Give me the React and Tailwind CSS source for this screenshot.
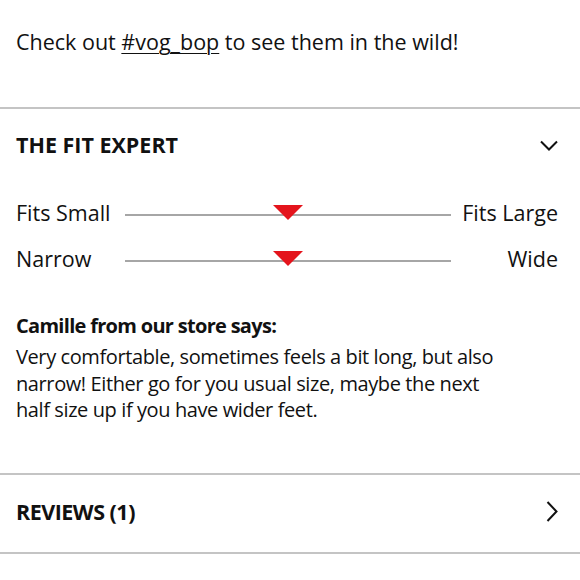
function FitSlider({ left, right }) {
  return (
    <div className="grid grid-cols-[109px_326px_1fr] items-center h-[26px]">
      <span className="whitespace-nowrap">{left}</span>
      <div className="relative top-[2px] h-[2px] bg-[#a6a6a6]">
        <div className="absolute left-1/2 -translate-x-1/2 top-[-9px] w-0 h-0 border-l-[15px] border-r-[15px] border-t-[15px] border-l-transparent border-r-transparent border-t-[#e4141c]"></div>
      </div>
      <span className="text-right whitespace-nowrap">{right}</span>
    </div>
  );
}

function App() {
  return (
    <div
      className="w-[580px] h-[580px] bg-white text-[#111] text-[21.5px] leading-[26px] overflow-hidden"
      style={{ fontFamily: "'Open Sans', 'Noto Sans', sans-serif" }}
    >
      <div className="pl-4 pr-[22px] pt-[29px] pb-[52px] whitespace-nowrap">
        Check out{" "}
        <a href="#" className="underline underline-offset-[3px] decoration-1">
          #vog_bop
        </a>{" "}
        to see them in the wild!
      </div>
      <div className="h-[2px] bg-[#c4c4c4]"></div>

      <div className="pl-4 pr-[22px]">
        <div className="flex items-center justify-between h-[72px]">
          <h2 className="font-bold">THE FIT EXPERT</h2>
          <svg width="18" height="12" viewBox="0 0 18 12" fill="none" stroke="#111" strokeWidth="2" className="mt-[2px]">
            <polyline points="1,1.5 9,9.5 17,1.5" />
          </svg>
        </div>
        <div className="mt-[19px] flex flex-col gap-[20px]">
          <FitSlider left="Fits Small" right="Fits Large" />
          <FitSlider left="Narrow" right="Wide" />
        </div>
        <div className="mt-[35px] pb-[49px] whitespace-nowrap text-[20px]">
          <p className="font-bold leading-[37px] tracking-[-0.7px]">Camille from our store says:</p>
          <p className="leading-[26.5px] tracking-[-0.4px]">
            Very comfortable, sometimes feels a bit long, but also
            <br />
            narrow! Either go for you usual size, maybe the next
            <br />
            half size up if you have wider feet.
          </p>
        </div>
      </div>
      <div className="h-[2px] bg-[#c4c4c4]"></div>

      <div className="pl-4 pr-[22px] pb-[3px] flex items-center justify-between h-[77px]">
        <h2 className="font-bold tracking-[-0.5px]">REVIEWS (1)</h2>
        <svg width="12" height="21" viewBox="0 0 12 21" fill="none" stroke="#111" strokeWidth="2">
          <polyline points="1.5,1 10.5,10.5 1.5,20" />
        </svg>
      </div>
      <div className="h-[2px] bg-[#c4c4c4]"></div>
    </div>
  );
}

export default App;
